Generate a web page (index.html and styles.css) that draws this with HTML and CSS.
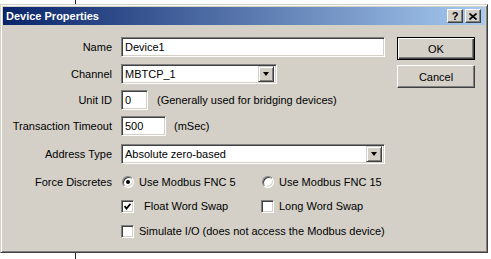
FILE: index.html
```html
<!DOCTYPE html>
<html>
<head>
<meta charset="utf-8">
<link rel="stylesheet" href="styles.css">
</head>
<body>
<div class="desk">
  <div class="dialog">
    <div class="titlebar">
      <span class="title">Device Properties</span>
      <div class="caps">
        <span class="cap cap-help">?</span>
        <span class="cap"><svg width="8" height="7" viewBox="0 0 8 7"><path d="M0.5 0.5 L7.5 6.5 M7.5 0.5 L0.5 6.5" stroke="#000" stroke-width="1.6" fill="none"/></svg></span>
      </div>
    </div>
    <div class="content">
      <div class="form">
        <div class="row r-name">
          <label class="lbl">Name</label>
          <div class="field w-name">Device1</div>
        </div>
        <div class="row r-channel">
          <label class="lbl">Channel</label>
          <div class="field combo w-channel"><span class="val">MBTCP_1</span><span class="drop"><i class="tri"></i></span></div>
        </div>
        <div class="row r-unit">
          <label class="lbl">Unit ID</label>
          <div class="field w-unit">0</div>
          <span class="note">(Generally used for bridging devices)</span>
        </div>
        <div class="row r-trans">
          <label class="lbl">Transaction Timeout</label>
          <div class="field w-trans">500</div>
          <span class="note note-ms">(mSec)</span>
        </div>
        <div class="row r-addr">
          <label class="lbl">Address Type</label>
          <div class="field combo w-addr"><span class="val">Absolute zero-based</span><span class="drop"><i class="tri"></i></span></div>
        </div>
        <div class="row r-force">
          <label class="lbl">Force Discretes</label>
          <div class="opts">
            <span class="opt"><span class="radio on"></span><span>Use Modbus FNC 5</span></span>
            <span class="opt"><span class="radio"></span><span>Use Modbus FNC 15</span></span>
          </div>
        </div>
        <div class="row r-float">
          <span class="lbl"></span>
          <div class="opts">
            <span class="opt opt-wide"><span class="check"><svg width="7" height="7" viewBox="0 0 7 7"><path d="M0.5 3 L2.5 5.5 L6.5 0.8" stroke="#000" stroke-width="1.8" fill="none"/></svg></span><span>Float Word Swap</span></span>
            <span class="opt opt-cb"><span class="check"></span><span>Long Word Swap</span></span>
          </div>
        </div>
        <div class="row r-sim">
          <span class="lbl"></span>
          <span class="opt opt-cb"><span class="check"></span><span>Simulate I/O (does not access the Modbus device)</span></span>
        </div>
      </div>
      <div class="buttons">
        <div class="btn btn-default">OK</div>
        <div class="btn btn-cancel">Cancel</div>
      </div>
    </div>
  </div>
</div>
</body>
</html>
```
FILE: styles.css
```css
* { box-sizing: border-box; }
html, body { margin: 0; padding: 0; }
body {
  width: 491px;
  height: 259px;
  background: #fff;
  font-family: "Liberation Sans", Arial, sans-serif;
  font-size: 11px;
  color: #000;
  position: relative;
  overflow: hidden;
}
body::before {
  content: "";
  position: absolute;
  left: 75px;
  top: 0;
  width: 1px;
  height: 259px;
  background: #222;
}
.desk { position: relative; padding-top: 4px; }
.dialog {
  position: relative;
  width: 488px;
  height: 249px;
  background: #d4d0c8;
  border: 1px solid;
  border-color: #d4d0c8 #404040 #404040 #d4d0c8;
  box-shadow: inset 1px 1px 0 #fff, inset -1px -1px 0 #808080;
  padding: 2px;
  display: flex;
  flex-direction: column;
}
.titlebar {
  height: 18px;
  background: linear-gradient(to right, #0a246a, #a6caf0);
  display: flex;
  align-items: center;
  justify-content: space-between;
  padding: 0 4px 0 3px;
  color: #fff;
  font-weight: bold;
}
.caps { display: flex; gap: 2px; }
.cap {
  width: 16px;
  height: 14px;
  background: #d4d0c8;
  border: 1px solid;
  border-color: #fff #404040 #404040 #fff;
  box-shadow: inset -1px -1px 0 #808080;
  display: flex;
  align-items: center;
  justify-content: center;
  color: #000;
  font-size: 11px;
  font-weight: bold;
  line-height: 1;
}
.content { display: flex; padding-top: 12px; }
.form { flex: 1; display: flex; flex-direction: column; }
.row { display: flex; align-items: center; height: 20px; }
.r-channel { margin-top: 7px; }
.r-unit { margin-top: 6px; }
.r-trans { margin-top: 6px; }
.r-addr { margin-top: 8px; }
.r-force { margin-top: 8px; }
.r-float { margin-top: 4px; }
.r-sim { margin-top: 5px; }
.lbl { width: 109px; text-align: right; margin-right: 9px; flex: none; }
.field {
  height: 20px;
  background: #fff;
  border: 1px solid;
  border-color: #808080 #fff #fff #808080;
  box-shadow: inset 1px 1px 0 #404040, inset -1px -1px 0 #d4d0c8;
  padding: 0 0 0 3px;
  line-height: 18px;
  white-space: nowrap;
  flex: none;
}
.w-name { width: 264px; }
.w-channel { width: 156px; }
.w-unit { width: 27px; }
.w-trans { width: 45px; }
.w-addr { width: 264px; }
.combo { display: flex; align-items: center; padding-right: 2px; }
.combo .val { flex: 1; }
.drop {
  width: 16px;
  height: 16px;
  background: #d4d0c8;
  border: 1px solid;
  border-color: #d4d0c8 #404040 #404040 #d4d0c8;
  box-shadow: inset 1px 1px 0 #fff, inset -1px -1px 0 #808080;
  display: flex;
  align-items: center;
  justify-content: center;
}
.tri {
  width: 0;
  height: 0;
  border-left: 3.5px solid transparent;
  border-right: 3.5px solid transparent;
  border-top: 4px solid #000;
}
.note { margin-left: 9px; white-space: nowrap; }
.note-ms { margin-left: 8px; }
.opts { display: grid; grid-template-columns: 140px auto; }
.opt { display: flex; align-items: center; gap: 5px; white-space: nowrap; }
.opt-wide { gap: 10px; }
.radio {
  width: 12px;
  height: 12px;
  margin-left: 1px;
  border-radius: 50%;
  background: #fff;
  border: 1px solid;
  border-color: #808080 #fff #fff #808080;
  box-shadow: inset 1px 1px 0 #404040, inset -1px -1px 0 #d4d0c8;
  display: flex;
  align-items: center;
  justify-content: center;
}
.radio.on::after {
  content: "";
  width: 4px;
  height: 4px;
  border-radius: 50%;
  background: #000;
}
.check {
  width: 13px;
  height: 13px;
  background: #fff;
  border: 1px solid;
  border-color: #808080 #fff #fff #808080;
  box-shadow: inset 1px 1px 0 #404040, inset -1px -1px 0 #d4d0c8;
  display: flex;
  align-items: center;
  justify-content: center;
}
.buttons {
  width: 78px;
  margin-right: 10px;
  display: flex;
  flex-direction: column;
  gap: 5px;
}
.btn {
  height: 23px;
  background: #d4d0c8;
  border: 1px solid;
  border-color: #fff #404040 #404040 #fff;
  box-shadow: inset -1px -1px 0 #808080;
  display: flex;
  align-items: center;
  justify-content: center;
}
.btn-default {
  border-color: #000;
  box-shadow: inset 1px 1px 0 #fff, inset -1px -1px 0 #404040, inset -2px -2px 0 #808080;
}
```
